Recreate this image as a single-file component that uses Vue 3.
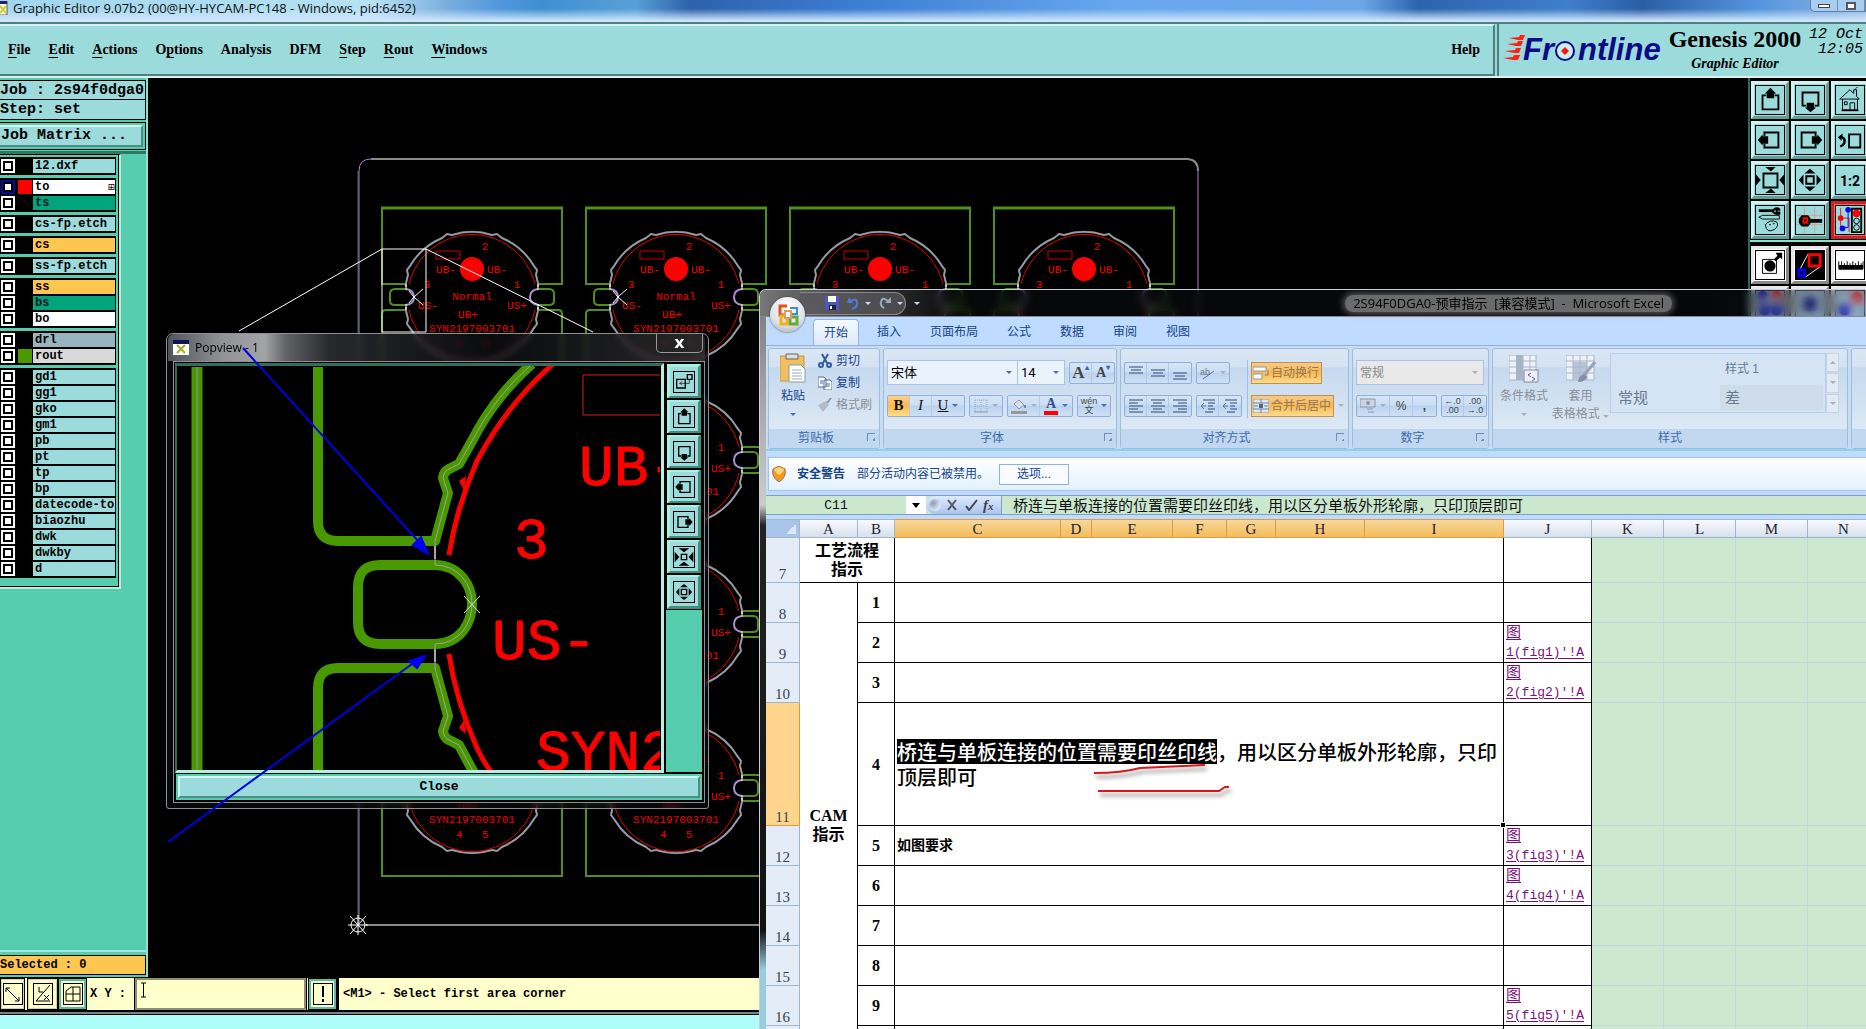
<script setup>
import { ref } from 'vue'

const menus = [
  ['', 'F', 'ile'], ['', 'E', 'dit'], ['', 'A', 'ctions'], ['O', 'p', 'tions'], ['Analysis', '', ''],
  ['DFM', '', ''], ['', 'S', 'tep'], ['', 'R', 'out'], ['', 'W', 'indows'],
]

const layerGroups = [
  [{ n: '12.dxf', c: 'signal' }],
  [{ n: 'to', c: 'white', swatch: 'red', active: true }, { n: 'ts', c: 'mask' }],
  [{ n: 'cs-fp.etch', c: 'signal' }],
  [{ n: 'cs', c: 'copper' }],
  [{ n: 'ss-fp.etch', c: 'signal' }],
  [{ n: 'ss', c: 'copper' }, { n: 'bs', c: 'mask' }, { n: 'bo', c: 'white' }],
  [{ n: 'drl', c: 'drill' }, { n: 'rout', c: 'rout', swatch: 'green' }],
  ['gd1', 'gg1', 'gko', 'gm1', 'pb', 'pt', 'tp', 'bp', 'datecode-to', 'biaozhu', 'dwk', 'dwkby', 'd'].map((n) => ({ n, c: 'signal' })),
]

const icons = {
  up: '<path d="M11 10H7v15h17V10h-4" fill="none" stroke="#000" stroke-width="2"/><path d="M15.500 2l6 6h-2v5h-8V8h-2z"/>',
  down: '<path d="M11 21H7V7h17v14h-4" fill="none" stroke="#000" stroke-width="2"/><path d="M15.500 28l6-5h-2v-5h-8v5h-2z"/>',
  left: '<path d="M9 11V7h15v16H9v-4" fill="none" stroke="#000" stroke-width="2"/><path d="M2 15l5-6v2h6v8H7v2z"/>',
  right: '<path d="M21 11V7H6v16h15v-4" fill="none" stroke="#000" stroke-width="2"/><path d="M28 15l-5-6v2h-6v8h6v2z"/>',
  home: '<path d="M4 14L15 4l4 4V4h3v7l3 3zM7 14v12h16V14M15 26v-8h5v8M9 17h3v3H9zM21 3l2-2" fill="none" stroke="#000"/><path d="M6 26h18" stroke="#000" stroke-width="2"/>',
  back: '<path d="M14 9h12v14H14z" fill="none" stroke="#000" stroke-width="2"/><path d="M2 12l5-4v3q5 2 3 8-1 3-5 4l-1-2q4-2 4-5 0-2-2-3v3z"/>',
  fit: '<path d="M8 8h15v15H8z" fill="none" stroke="#000" stroke-width="2"/><path d="M10 1h11l-5 5zM10 29h11l-5-5zM0 9v12l5-6zM30 9v12l-5-6z"/>',
  zoom: '<path d="M11 11h8v8h-8z" fill="none" stroke="#000" stroke-width="2"/><path d="M9 8h12l-6-5zM9 22h12l-6 5zM8 9v12l-5-6zM22 9v12l5-6z"/>',
  shrink: '<path d="M11 11h8v8h-8z" fill="none" stroke="#000" stroke-width="2"/><path d="M7 2h16l-8 6zM7 28h16l-8-6zM1 7v16l7-8zM29 7v16l-7-8z"/>',
  ratio: '<text x="15" y="21" text-anchor="middle" font-family="Roboto" font-weight="700" font-size="15">1:2</text>',
  tools: '<path d="M3 5h15" stroke="#000" stroke-width="3"/><path d="M26 4h-4v3h4M18 6q2-5 7-3M18 6q3 4 8 2" fill="none" stroke="#000" stroke-width="2"/><path d="M3 12l4-2h18v4H7zM10 20q5-6 12-3 3 4-2 8-9 5-10-5M14 20h2M18 19h2" fill="none" stroke="#000"/>',
  snap: '<path d="M9 1v28M20 1v28M1 10h28M1 20h28" stroke="#d99"/><path d="M6 10h7l3 4h12v4H16l-3 4H6l-3-4v-4z"/><path d="M8 13h4v5H8z" fill="none" stroke="#f00" stroke-width="2"/>',
  lights: '<path d="M0 0h30v30H0z" fill="#9cdbdb"/><path d="M5 2v24M5 13h9v15" fill="none" stroke="#e11"/><circle cx="5" cy="13" r="3" fill="#f00"/><path d="M13 5v18H7" fill="none" stroke="#00f"/><circle cx="13" cy="4" r="3" fill="#00f"/><circle cx="7" cy="24" r="3" fill="#00f"/><path d="M17 3h10v25H17z" fill="#9cdbdb" stroke="#000" stroke-width="2"/><circle cx="22" cy="8" r="4" fill="#f00"/><circle cx="22" cy="16" r="3" fill="none" stroke="#000"/><circle cx="22" cy="23" r="3" fill="none" stroke="#000"/>',
  pick: '<path d="M7 9h15v15H7z" fill="none" stroke="#000"/><circle cx="15" cy="16" r="6"/><path d="M19 9l4-4-2-3h7v7l-2-2-5 4z"/>',
  popup: '<path d="M0 0h30v30H0z"/><path d="M3 22L13 3M10 28L27 16" stroke="#fff"/><path d="M14 4h12v12H14z" fill="none" stroke="#f00" stroke-width="3"/><path d="M3 20h6v7H3z" fill="none" stroke="#00f" stroke-width="3"/>',
  ruler: '<path d="M3 11v8h26v-8" fill="none" stroke="#000"/><path d="M3 15h26v5H3z"/><path d="M6 11v5M9 13v4M12 11v5M15 13v4M18 11v5M21 13v4M24 11v5M27 13v4" stroke="#000"/>',
  dots: '<circle cx="7" cy="5" r="5" fill="#11c"/><circle cx="22" cy="5" r="5" fill="#e22"/><circle cx="9" cy="20" r="6" fill="#11c"/><circle cx="22" cy="20" r="6" fill="#11c"/>',
  chip: '<path d="M8 7h14v14H8z" fill="#117"/>',
  pair: '<circle cx="22" cy="7" r="6" fill="#e22"/><circle cx="9" cy="20" r="6" fill="#11c"/>',
  link: '<path d="M4 11h13v13H4zM20 4h7v7h-7z" fill="none" stroke="#000" stroke-width="2"/><path d="M23 11v6H8M12 14l-3 3 3 3" fill="none" stroke="#000"/>',
}
const tools = [
  ['up', 'Pan up'], ['down', 'Pan down'], ['home', 'Home'],
  ['left', 'Pan left'], ['right', 'Pan right'], ['back', 'Previous view'],
  ['fit', 'Zoom out'], ['zoom', 'Zoom in'], ['ratio', 'Scale'],
  ['tools', 'Settings'], ['snap', 'Snap'], ['lights', 'Affected layers'],
]
const modes = [
  ['pick', 'Select feature'], ['popup', 'Popview'], ['ruler', 'Measure'],
  ['dots', 'Net points'], ['chip', 'Pad'], ['pair', 'Pair'],
]
const popTools = [
  ['link', 'Link view'], ['up', 'Up'], ['down', 'Down'], ['left', 'Left'], ['right', 'Right'], ['shrink', 'Zoom out'], ['zoom', 'Zoom in'],
]

// Panel array: four board columns; boards fully behind a window are skipped
const colX = [472, 676, 880, 1084]
const rowY = [297, 460, 624, 788]
const boards = [[0, 0], [0, 3], [1, 0], [1, 1], [1, 2], [1, 3], [2, 0], [3, 0]].map(([c, r]) => ({ x: colX[c], y: rowY[r], mark: c < 2, right: c === 1 && (r === 1 || r === 2), top: c > 1 }))
const slots = colX.map((x) => {
  const l = x - 90
  const r = x + 90
  let d = `M${x - 66} 284H${l}V208M${r} 208V284H${x + 66}`
  for (let i = 0; i < 3; i++) {
    const a = rowY[i] + 13
    const b = rowY[i + 1] - 13
    d += `M${x - 66} ${a}H${l + 4}q-4 0-4 4V${b}H${x - 66}M${x + 66} ${a}H${r - 4}q4 0 4 4V${b}H${x + 66}`
  }
  return { x, d: d + `M${x - 66} 801H${l}V876H${r}V801H${x + 66}` }
})
const outline = 'M-66-10V-14L-64-22-65-27-62-31A68 68 0 0 1-30-59L-25-63-20-62A67 67 0 0 1 20-62L25-63 30-59A68 68 0 0 1 62-31L65-27 64-22 66-14V-10M-66 10V14L-64 22-65 27-62 31A68 68 0 0 0-30 59L-25 63-20 62A67 67 0 0 0 20 62L25 63 30 59A68 68 0 0 0 62 31L65 27 64 22 66 14V10'

const tabs = ['开始', '插入', '页面布局', '公式', '数据', '审阅', '视图']
const formula = ref('桥连与单板连接的位置需要印丝印线，用以区分单板外形轮廓，只印顶层即可')
const coord = ref('')
const cols = [34, 58, 37, 166, 31, 81, 54, 49, 89, 139, 88, 72, 72, 72, 72]
const letters = 'ABCDEFGHIJKLMN'.split('')
const rows = [
  { r: 8, n: 1 }, { r: 9, n: 2, fig: 1 }, { r: 10, n: 3, fig: 2 }, { r: 11, n: 4, tall: true },
  { r: 12, n: 5, fig: 3, text: '如图要求' }, { r: 13, n: 6, fig: 4 }, { r: 14, n: 7 }, { r: 15, n: 8 },
  { r: 16, n: 9, fig: 5 }, { r: '', n: '' },
]
</script>

<template>
  <div class="desktop">
    <header class="titlebar">
      <svg class="app-ico" width="8" height="14" viewBox="0 0 8 14"><path d="M-4 0H7V14H-4z" fill="#fff" stroke="#555" /><path d="M-4 0H7V3H-4z" fill="#226" /><path d="M0 5l6 7M6 5l-6 7" stroke="#cc2" stroke-width="2" /></svg>
      <span>Graphic Editor 9.07b2 (00@HY-HYCAM-PC148 - Windows, pid:6452)</span>
      <div class="winbtns"><button aria-label="Minimize"><i class="mini"></i></button><button aria-label="Maximize"><i class="maxi"></i></button></div>
    </header>

    <div class="topbar">
      <nav class="menubar">
        <button v-for="m in menus" :key="m.join('')">{{ m[0] }}<u>{{ m[1] }}</u>{{ m[2] }}</button>
        <button class="help">Help</button>
      </nav>
      <div class="brand">
        <svg class="logo" width="160" height="30" viewBox="0 0 160 30" role="img" aria-label="Frontline">
          <path d="M6 4l10-1 1-2h5l-2 5h-5zM4 10l10-1 1-2h5l-2 5h-5zM2 17l10-1 1-2h5l-2 5h-5zM0 24l10-1 1-2h6l-2 5h-5z" fill="#f21" />
          <g fill="#0b0b86" font-family="Liberation Sans" font-weight="700" font-style="italic" font-size="31"><text x="20" y="26">Fr</text><text x="75" y="26">ntline</text></g>
          <ellipse cx="62" cy="17" rx="9" ry="9" fill="#c8eef0" stroke="#0b0b86" stroke-width="2" /><path d="M62 13l4 4-4 4-4-4z" fill="#f11" />
        </svg>
        <div class="product"><b>Genesis 2000</b><i>Graphic Editor</i></div>
        <time class="clock">12 Oct<br />12:05</time>
      </div>
    </div>

    <main class="work">
      <aside class="side">
        <div class="jobbox"><div>Job : 2s94f0dga0</div><div>Step: set</div></div>
        <div class="matrix"><button>Job Matrix ...</button></div>
        <div class="layerpane">
          <div class="layers">
            <div v-for="(g, i) in layerGroups" :key="i" class="group">
              <label v-for="l in g" :key="l.n" class="layer">
                <input type="checkbox" :class="{ on: l.active }" /><span class="swatch" :class="l.swatch"></span><span class="lname" :class="l.c">{{ l.n }}<em v-if="l.active">⊞</em></span>
              </label>
            </div>
          </div>
        </div>
        <div class="selected"><div>Selected : 0</div></div>
      </aside>

      <div class="canvas">
        <svg width="100%" height="100%">
          <g transform="translate(-147 -78)" fill="none">
            <path d="M358 925V171" stroke="#3c7a10" /><path d="M359 925V171Q359 159 371 159" stroke="#a57fd0" />
            <path d="M371 159H1188Q1198 160 1198 171" stroke="#8b8b8b" stroke-width="2" /><path d="M1198 171V925" stroke="#a57fd0" /><path d="M366 925H1198" stroke="#8b8b8b" stroke-width="2" />
            <g v-for="s in slots" :key="s.x"><path :d="s.d" stroke="#4f8f1e" stroke-width="2" /><path :d="`M${s.x - 91} 208H${s.x + 91}`" stroke="#4f8f1e" stroke-width="3" /></g>
            <g v-for="b in boards" :key="b.x + '-' + b.y" :transform="`translate(${b.x} ${b.y})`">
              <path :d="outline" stroke="#4f8f1e" stroke-width="2" /><path :d="outline" stroke="#a58fc8" stroke-width="1.500" />
              <path d="M-66-8H-77q-5 0-5 5V4q0 4 5 4h11M66-8H77q5 0 5 5V4q0 4-5 4H66" stroke="#4f8f1e" stroke-width="2" />
              <path d="M-66-8Q-58-7-58 0-58 7-66 8M66-8Q58-7 58 0 58 7 66 8" stroke="#a98fd0" stroke-width="2" />
              <path d="M-66-13v6M66-13v6M-66 7v6M66 7v6" stroke="#fff" />
              <path d="M-63-13A65 65 0 0 1-30-55A63 63 0 0 1 30-55A65 65 0 0 1 63-13M-63 13A65 65 0 0 0-30 56A63 63 0 0 0 30 56A65 65 0 0 0 63 13" stroke="#e00000" />
              <path d="M-36-46h24v8h-24z" stroke="#c00" />
              <circle cy="-28" r="12" fill="#f00" />
              <g class="silk">
                <text x="45" y="-9">1</text>
                <template v-if="!b.right">
                  <text x="13" y="-47">2</text><text x="-26" y="-24">UB-</text><text x="25" y="-24">UB-</text><text x="-45" y="-9">3</text>
                  <text v-if="!b.top" x="0" y="3">Normal</text><text v-if="!b.top" x="-44" y="12">US-</text><text v-if="!b.top" x="-4" y="21">UB+</text>
                  <text v-if="!b.top" x="-13" y="50">4</text><text v-if="!b.top" x="13" y="50">5</text>
                </template>
                <text v-if="!b.top" x="45" y="12">US+</text><text v-if="!b.top" x="0" y="35">SYN2197003701</text>
              </g>
              <path v-if="b.mark" d="M-58 0l9-8M-58 0l9 8M-58 0l-5-6M-58 0l-5 6" stroke="#fff" />
            </g>
            <path d="M239 331L382 249H426V332H382V249M426 249L593 332" stroke="#fff" />
            <g stroke="#fff"><circle cx="358" cy="925" r="7" /><path d="M348 925h20M358 915v20M350 916l16 18M366 916l-16 18" /></g>
          </g>
        </svg>
      </div>

      <aside class="toolbar">
        <div class="tgrid"><button v-for="t in tools" :key="t[0]" class="tool" :class="t[0]" :aria-label="t[1]"><svg viewBox="0 0 30 30" v-html="icons[t[0]]"></svg></button></div>
        <div class="tgrid modes"><button v-for="t in modes" :key="t[0]" class="tool" :class="t[0]" :aria-label="t[1]"><svg viewBox="0 0 30 30" v-html="icons[t[0]]"></svg></button></div>
      </aside>
    </main>

    <footer class="status">
      <button class="sb" aria-label="Corner mode"><svg width="18" height="20" viewBox="0 0 18 20"><path d="M2 4l13 13M2 8V4h4M11 17h4v-4" fill="none" stroke="#000" /></svg></button>
      <button class="sb" aria-label="Angle mode"><svg width="18" height="20" viewBox="0 0 18 20"><path d="M16 1L2 17h14M5 3v5h4M10 11l5 5M15 11l-5 5" fill="none" stroke="#000" /></svg></button>
      <button class="sb raised" aria-label="Grid mode"><svg width="18" height="20" viewBox="0 0 18 20"><path d="M2 17V7l5-4h9v14zM9 3v14M2 10h14" fill="none" stroke="#000" /></svg></button>
      <label for="xy">X Y :</label>
      <div class="xybox"><input id="xy" v-model="coord" type="text" /><svg class="ibeam" width="7" height="16" viewBox="0 0 7 16"><path d="M1 1h5M1 15h5M3.500 1v14" stroke="#000" /></svg></div>
      <button class="sb raised" aria-label="Alert"><svg width="18" height="20" viewBox="0 0 18 20"><path d="M9 2v11M9 15v3" stroke="#000" stroke-width="2" /></svg></button>
      <output>&lt;M1&gt; - Select first area corner</output>
    </footer>
    <div class="baseline"></div>

    <section class="popview">
      <header><svg width="16" height="15" viewBox="0 0 16 15"><path d="M0 0h16v15H0z" fill="#fff" /><path d="M0 0h16v4H0z" fill="#115" /><path d="M4 5l8 8M12 5l-8 8" stroke="#aa2" stroke-width="2" /></svg><span>Popview - 1</span><button aria-label="Close window">x</button></header>
      <div class="popinner">
        <div class="poprow">
          <div class="popcanvas">
            <svg width="100%" height="100%">
              <g transform="translate(-176 -365)" fill="none">
                <path d="M197 366V770" stroke="#489800" stroke-width="11" /><path d="M197 366V770" stroke="#9a8f9a" />
                <g stroke="#489800" stroke-width="10">
                  <path d="M318 366V520Q318 540 338 540H435L448 492 443 477Q444 470 449 468L459 463 472 440Q495 395 532 363" stroke-linejoin="round" />
                  <path d="M318 771V687Q318 667 338 667H435L448 715 443 730Q444 737 449 739L459 744 474 772" stroke-linejoin="round" />
                  <path d="M435 564H380Q358 564 358 586V621Q358 643 380 643H435Q452 643 463 630 472 618 472 603 472 588 463 577 452 564 435 564z" />
                </g>
                <path d="M435 564V540L448 492 443 477Q444 470 449 468L459 463 472 440Q495 395 532 363M435 643V667L448 715 443 730Q444 737 449 739L459 744 474 772M435 564Q452 564 463 577 472 588 472 603 472 618 463 630 452 643 435 643" stroke="#a99aa9" />
                <path d="M435 545v13M435 648v13" stroke="#fff" /><path d="M464 595l16 17M480 595l-16 17" stroke="#ddd" />
                <path d="M449 554Q456 508 477 460 508 402 553 363M449 653Q456 700 477 747 484 762 492 772" stroke="#f00" stroke-width="5" />
                <path d="M459 480l7-5-2 14zM459 727l7 6-2-14z" fill="#f00" />
                <path d="M664 374H583V414H664" stroke="#d02020" />
                <g class="bigsilk"><text x="579" y="484">UB-</text><text x="514" y="557">3</text><text x="492" y="658">US-</text><text x="536" y="769">SYN2</text></g>
              </g>
            </svg>
          </div>
          <div class="poptools"><button v-for="t in popTools" :key="t[0]" :aria-label="t[1]"><svg viewBox="0 0 30 30" width="22" height="22" v-html="icons[t[0]]"></svg></button></div>
        </div>
        <div class="popclose"><button>Close</button></div>
      </div>
    </section>

    <section class="excel">
      <header class="xtitle">
        <div class="qat">
          <svg width="14" height="14" viewBox="0 0 14 14"><path d="M0 0h14v14H0z" fill="#4b55c4" /><path d="M3 0h8v6H3z" fill="#fff" /><path d="M4 9h7v5H4z" fill="#223" /><path d="M5 10h2v3H5z" fill="#fff" /></svg>
          <svg width="12" height="14" viewBox="0 0 12 14"><path d="M3 6q6-5 7 0 1 5-5 7" fill="none" stroke="#4a7fd0" stroke-width="2" /><path d="M0 7l2-6 4 6z" fill="#4a7fd0" /></svg><i class="dn lt"></i>
          <svg width="12" height="14" viewBox="0 0 12 14"><path d="M9 5Q3 0 2 6q-1 4 3 6" fill="none" stroke="#9ab" stroke-width="2" /><path d="M12 7V1L6 7z" fill="#9ab" /></svg><i class="dn lt"></i>
        </div>
        <i class="dn lt bar"></i>
        <h1>2S94F0DGA0-预审指示&nbsp; [兼容模式]&nbsp; - &nbsp;Microsoft Excel</h1>
      </header>
      <button class="orb" aria-label="Office"><svg width="24" height="26" viewBox="0 0 24 26" fill="none" stroke-width="3"><path d="M11 4H4v9h5" stroke="#e0541c" /><path d="M14 6h7v6h-6" stroke="#3b8fd0" stroke-width="2" /><path d="M10 14H5v8h6v-5" stroke="#f0b020" /><path d="M14 15h7v7h-7v-5" stroke="#6aa83a" /><path d="M9 9h6v7H9z" stroke="#d8a060" stroke-width="2" /></svg></button>
      <div class="xbody">
        <div class="tabs"><button v-for="(t, i) in tabs" :key="t" :class="{ cur: !i }">{{ t }}</button></div>
        <div class="ribbon">
          <div class="rg g1">
            <div class="rb">
              <button class="paste"><svg width="26" height="30" viewBox="0 0 26 30"><path d="M0 3h24v25H0z" fill="#f0c060" stroke="#c89838" /><path d="M6 1h12v5H6z" fill="#ddd" stroke="#666" /><path d="M9 12h12l4 4v13H9z" fill="#fff" stroke="#89a" /><path d="M12 17h9M12 20h10M12 23h10M12 26h10" stroke="#9ab" /></svg>粘贴<i class="dn"></i></button>
              <div class="clip">
                <button><svg width="14" height="16" viewBox="0 0 14 16" fill="none" stroke="#345c9c" stroke-width="2"><path d="M4 1l5 9M10 1L5 10" /><circle cx="3" cy="12" r="2" /><circle cx="11" cy="12" r="2" /></svg>剪切</button>
                <button><svg width="14" height="14" viewBox="0 0 14 14" fill="#fff" stroke="#4a6aa0"><path d="M0 1h6l2 2v8H0zM6 4h6l2 2v8H6z" /><path d="M8 8h4M8 10h4M2 5h3M2 7h3" /></svg>复制</button>
                <button class="off"><svg width="14" height="14" viewBox="0 0 14 14"><path d="M0 7l8-4 3 4-6 7z" fill="#b4bcc6" /><path d="M9 5l4-5" stroke="#8f98a4" stroke-width="2" /></svg>格式刷</button>
              </div>
            </div>
            <div class="rl">剪贴板<i class="launch"></i></div>
          </div>
          <div class="rg g2">
            <div class="rb rows">
              <div class="r"><span class="sel font"><select aria-label="Font"><option>宋体</option></select><i class="dn"></i></span><span class="sel size"><select aria-label="Size"><option>14</option></select><i class="dn"></i></span><span class="bg"><button class="big">A<sup>▴</sup></button><button class="sm">A<sup>▾</sup></button></span></div>
              <div class="r">
                <span class="bg"><button class="hot ser"><b>B</b></button><button class="ser"><i>I</i></button><button class="ser wide"><u>U</u><i class="dn"></i></button></span>
                <span class="bg"><button class="wide" aria-label="Borders"><svg width="14" height="14" viewBox="0 0 14 14"><path d="M1 1h12v12M1 1v12M7 1v12M1 7h12" stroke="#9ab" stroke-dasharray="1 1" fill="none" /><path d="M0 13h14" stroke="#89a" /></svg><i class="dn off"></i></button></span>
                <span class="bg"><button class="wide" aria-label="Fill"><svg width="16" height="16" viewBox="0 0 16 16"><path d="M3 6l5-4 5 5-5 4z" fill="#dde" stroke="#8a96a8" /><path d="M14 7v3" stroke="#789" stroke-width="2" /><path d="M0 13h16v3H0z" fill="#999" /></svg><i class="dn off"></i></button><button class="wide fc"><span>A</span><i class="dn"></i></button></span>
                <span class="bg"><button class="wide wen"><span>wén<br />文</span><i class="dn"></i></button></span>
              </div>
            </div>
            <div class="rl">字体<i class="launch"></i></div>
          </div>
          <div class="rg g3">
            <div class="rb two">
              <div class="rows">
                <div class="r"><span class="bg"><button v-for="k in 3" :key="k" aria-label="Vertical align"><svg width="14" height="14" viewBox="0 0 14 14"><path :d="`M0 ${k * 3 - 2}h14M2 ${k * 3 + 1}h10M0 ${k * 3 + 4}h14`" stroke="#334a70" /></svg></button></span><span class="bg"><button class="wide" aria-label="Orientation"><svg width="16" height="14" viewBox="0 0 16 14"><text x="0" y="9" font-size="9" fill="#678" font-family="Liberation Sans">ab</text><path d="M3 13L14 5" stroke="#678" /></svg><i class="dn off"></i></button></span></div>
                <div class="r"><span class="bg"><button v-for="k in 3" :key="k" aria-label="Horizontal align"><svg width="14" height="14" viewBox="0 0 14 14"><path :d="`M0 1h14M${[0, 2, 5][k - 1]} 4h9M0 7h14M${[0, 2, 5][k - 1]} 10h9M0 13h14`" stroke="#334a70" /></svg></button></span><span class="bg"><button v-for="k in 2" :key="k" aria-label="Indent"><svg width="14" height="14" viewBox="0 0 14 14"><path d="M2 1h12M7 4h7M7 7h5M7 10h7M4 13h8" stroke="#334a70" /><path d="M0 7h5M3 4L0 7l3 3" stroke="#678" fill="none" /></svg></button></span></div>
              </div>
              <div class="rows wrapcol">
                <div class="r"><button class="gold"><svg width="16" height="14" viewBox="0 0 16 14"><path d="M0 1h13v4H0zM0 8h9v5H0z" fill="#fff" stroke="#89a" /><path d="M15 4v5h-3" stroke="#58a" fill="none" /></svg>自动换行</button></div>
                <div class="r"><button class="gold"><svg width="16" height="14" viewBox="0 0 16 14"><path d="M0 0h16v14H0z" fill="#dde6f4" stroke="#89a" /><path d="M0 4h16M0 10h16M8 0v4M8 10v4M1 7h4M11 7h4" stroke="#68a" /><path d="M6 5h4v4H6z" fill="#567" /></svg>合并后居中</button><i class="dn off"></i></div>
              </div>
            </div>
            <div class="rl">对齐方式<i class="launch"></i></div>
          </div>
          <div class="rg g4">
            <div class="rb rows">
              <div class="r"><span class="sel num"><select aria-label="Number format" disabled><option>常规</option></select><i class="dn off"></i></span></div>
              <div class="r"><span class="bg pct"><button class="wide" aria-label="Currency"><svg width="16" height="16" viewBox="0 0 16 16"><path d="M0 1h15v8H0z" fill="#cdd5e0" stroke="#8a96a8" /><circle cx="8" cy="5" r="2" fill="#89a" /><path d="M7 11h6M8 14h6" stroke="#89a" /></svg><i class="dn off"></i></button><button>%</button><button><b>,</b></button></span><span class="bg dec"><button>←.0<br />.00</button><button>.00<br />→.0</button></span></div>
            </div>
            <div class="rl">数字<i class="launch"></i></div>
          </div>
          <div class="rg g5">
            <div class="rb">
              <button class="cf off"><svg width="30" height="28" viewBox="0 0 30 28"><path d="M0 0h27v25H0z" fill="#eef2f8" stroke="#a8b4c8" /><path d="M7 0h7v25H7z" fill="#a8b4c8" /><path d="M0 6h27M0 12h27M0 18h27M14 0v25M21 0v25" stroke="#a8b4c8" /><path d="M15 15h14v12H15z" fill="#eef" stroke="#889" /><path d="M22 18l-3 2 3 2M23 22l3 2-3 2" stroke="#667" fill="none" /></svg>条件格式<i class="dn off"></i></button>
              <button class="cf off"><svg width="30" height="28" viewBox="0 0 30 28"><path d="M0 0h28v25H0z" fill="#eef2f8" stroke="#a8b4c8" /><path d="M7 7h14v18H7z" fill="#b8c4d8" /><path d="M0 6h28M0 12h28M0 18h28M7 0v25M14 0v25M21 0v25" stroke="#a8b4c8" /><path d="M29 7L18 20" stroke="#98a4b8" stroke-width="3" /><path d="M12 27q1-7 6-8l3 3q-2 5-9 5" fill="#8490a8" /></svg>套用<span>表格格式 <i class="dn off"></i></span></button>
              <div class="gallery"><span></span><span>样式 1</span><span class="lg">常规</span><span class="lg dim">差</span></div>
              <div class="gscroll"><button aria-label="Up"><i class="dn off flip"></i></button><button aria-label="Down"><i class="dn off"></i></button><button aria-label="More"><i class="dn off"></i></button></div>
            </div>
            <div class="rl wide">样式</div>
          </div>
          <div class="rg g6"><div class="rb"><button class="cf off"><svg width="30" height="28" viewBox="0 0 30 28"><path d="M0 1h20v5H0zM0 16h20v10H0z" fill="#fff" stroke="#a8b4c8" /></svg></button></div><div class="rl"></div></div>
        </div>
        <div class="warn">
          <svg width="14" height="16" viewBox="0 0 14 16"><path d="M7 0l6 3q2 8-6 13-8-5-6-13z" fill="#f59a1c" stroke="#876" /><path d="M7 1l5 2q0 3-5 6-5-4-5-6z" fill="#fbd27a" /></svg>
          <strong>安全警告</strong><span>部分活动内容已被禁用。</span><button>选项...</button>
        </div>
        <div class="fbar">
          <input class="name" aria-label="Name box" value="C11" /><button class="ndrop" aria-label="Names"><i class="dn blk"></i></button>
          <div class="fx"><i class="knob"></i><button aria-label="Cancel"><svg width="10" height="12" viewBox="0 0 10 12"><path d="M1 1l8 10M9 1L1 11" stroke="#556" stroke-width="2" /></svg></button><button aria-label="Enter"><svg width="13" height="12" viewBox="0 0 13 12"><path d="M1 7l3 4L12 1" stroke="#445" stroke-width="2" fill="none" /></svg></button><button class="fn">f<small>x</small></button></div>
          <input v-model="formula" class="ftext" aria-label="Formula" />
        </div>
        <div class="sheet">
          <table>
            <colgroup><col v-for="(w, i) in cols" :key="i" :style="{ width: w + 'px' }" /></colgroup>
            <thead><tr><th class="corner"></th><th v-for="(l, i) in letters" :key="l" :class="{ hl: i > 1 && i < 9 }">{{ l }}</th></tr></thead>
            <tbody>
              <tr class="r7"><th>7</th><td colspan="2" class="c cap">工艺流程<br />指示</td><td colspan="7"></td><td></td><td v-for="k in 4" :key="k" class="out"></td></tr>
              <tr v-for="(r, i) in rows" :key="r.r" :class="{ tall: r.tall }">
                <th>{{ r.r }}</th>
                <td v-if="!i" :rowspan="rows.length" class="c cap cam"><div>CAM<br />指示</div></td>
                <td class="c no">{{ r.n }}</td>
                <td v-if="r.tall" colspan="7" class="note"><mark>桥连与单板连接的位置需要印丝印线</mark>，用以区分单板外形轮廓，只印<br />顶层即可<i class="handle"></i></td>
                <td v-else colspan="7" class="req">{{ r.text }}</td>
                <td class="fig"><a v-if="r.fig" href="#"><span>图</span><br />{{ r.fig }}(fig{{ r.fig }})'!A</a></td>
                <td v-for="k in 4" :key="k" class="out"></td>
              </tr>
            </tbody>
          </table>
        </div>
      </div>
    </section>

    <svg class="marks" width="100%" height="100%">
      <g stroke="#0000e8" stroke-width="2" fill="#0000ff"><path d="M243 348L420 543M168 842L412 664" /><path d="M428 554L413 545 421 537zM425 656L417 668 409 661z" /></g>
      <g class="pen"><path d="M1094 773Q1122 773 1140 768 1160 767 1205 765" /><path d="M1098 791H1219L1225 787H1229" /></g>
    </svg>
  </div>
</template>

<style>
body { margin: 0; overflow: hidden; }
</style>

<style scoped>
* { box-sizing: border-box; }
button { font: inherit; color: inherit; margin: 0; padding: 0; border: 0; background: none; border-radius: 0; }
.desktop { position: relative; height: 100vh; display: flex; flex-direction: column; background: #000; overflow: hidden; font-family: "Liberation Sans", "Noto Sans CJK SC", sans-serif; }

.titlebar { height: 22px; flex: none; display: flex; align-items: center; gap: 5px; padding-bottom: 6px; font: 13px/16px "Open Sans", sans-serif; color: #111;
  background: linear-gradient(180deg, transparent 40%, #cfe6fb 95%), linear-gradient(90deg, #9fd6ee 0, #b7e2f4 20%, #79aede 24%, #4f96dc 27%, #3f8fd0 29%, #58a0d8 34%, #2d62aa 37%, #3a7ad0 45%, #68a8ee 60%, #6aa6e8 73%, #2c64ac 76%, #3f7fcb 84%, #2a5ea4 88%, #5294dc 94%, #8fb8e4 100%); }
.app-ico { flex: none; }
.winbtns { margin-left: auto; align-self: flex-start; display: flex; width: 56px; height: 12px; border: 1px solid #5f7fa8; border-top: 0; border-radius: 0 0 0 5px; background: #a9cdee; }
.winbtns button { width: 28px; display: flex; justify-content: center; align-items: center; border-right: 1px solid #6f8fb8; }
.mini { width: 12px; height: 4px; background: #fff; border: 1px solid #445; }
.maxi { width: 10px; height: 8px; background: #fff; border: 2px solid #556; }

.topbar { height: 56px; flex: none; display: flex; border-top: 2px solid #4f8080; background: #9cdbdb; border-bottom: 2px solid #d9f3f3; }
.menubar { flex: 1; display: flex; align-items: center; gap: 18px; padding: 0 13px 0 8px; font: bold 14px/18px "Liberation Serif", serif; border-top: 2px solid #d4f2f2; border-right: 2px solid #4f8080; border-bottom: 2px solid #4f8080; }
.menubar u { text-underline-offset: 3px; }
.menubar .help { margin-left: auto; }
.brand { width: 369px; flex: none; display: flex; align-items: flex-start; border-left: 2px solid #4f8080; margin-left: 2px; background: #9cdbdb; }
.logo { flex: none; margin: 10px 0 0 4px; }
.product { flex: none; width: 140px; margin: 2px 0 0 2px; display: flex; flex-direction: column; align-items: center; white-space: nowrap; }
.product b { font: bold 24px/26px "Liberation Serif", serif; }
.product i { font: italic bold 14px/24px "Liberation Serif", serif; }
.clock { flex: none; width: 58px; margin: 3px 0 0 0; text-align: right; font: italic 15px/15px "Liberation Mono", monospace; }

.work { flex: 1; min-height: 0; display: flex; }
.side { width: 148px; flex: none; display: flex; flex-direction: column; background: #55cdae; font: bold 15px/20px "Liberation Mono", monospace; border-right: 2px solid #8fe0cc; padding-top: 2px; }
.jobbox { width: 146px; border: 1px solid #000; border-left: 0; background: #9cdbdb; margin-bottom: 2px; white-space: nowrap; }
.jobbox div { height: 19px; }
.jobbox div:first-child { border-bottom: 1px solid #000; }
.matrix { width: 146px; height: 28px; border: 1px solid #000; border-left: 0; padding: 2px 2px 2px 0; }
.matrix button { width: 100%; height: 100%; text-align: left; padding-left: 1px; line-height: 18px; background: #9cdbdb; border: solid; border-width: 2px 2px 2px 0; border-color: #d4f6f0 #4d8f88 #4d8f88; }
.layerpane { flex: 1; border-top: 3px solid #2b7a66; margin-top: 1px; border-bottom: 2px solid #9eeadb; }
.layers { width: 121px; padding: 2px 4px 9px 0; border: solid; border-width: 1px 2px 2px 0; border-color: #000 #b0efe2 #b0efe2; box-shadow: inset -1px -1px 0 #000; }
.group { background: #000; padding: 1px 0; margin-bottom: 3px; width: 116px; }
.group:last-child { margin-bottom: 0; }
.layer { display: flex; align-items: center; height: 16px; font-size: 12px; line-height: 14px; }
.layer input { appearance: none; flex: none; width: 14px; height: 14px; margin: 0 3px 0 1px; border: 2px solid #fff; background: #fff; outline: 2px solid #000; outline-offset: -4px; }
.layer input.on { border-color: #001199; }
.swatch { flex: none; width: 14px; height: 14px; margin-right: 1px; }
.swatch.red { background: #f00; }
.swatch.green { background: #4a9900; }
.lname { width: 82px; height: 14px; padding-left: 2px; display: flex; justify-content: space-between; align-items: center; }
.lname em { font: 9px/10px "DejaVu Sans", sans-serif; }
.signal { background: #9cdbdb; } .white { background: #fff; } .mask { background: #00a57c; color: #012; } .copper { background: #fdc64f; } .drill { background: #9ab4bf; } .rout { background: #d9d9d9; }
.selected { height: 25px; padding: 3px 0; }
.selected div { width: 146px; height: 20px; border: 1px solid #000; border-left: 0; background: #fdc64f; font-size: 12px; line-height: 18px; }

.canvas { flex: 1; min-width: 0; background: #000; }
.canvas svg { display: block; margin-left: -1px; }
.silk text { font: 11px "Liberation Mono", monospace; fill: #f00000; text-anchor: middle; }
.bigsilk text { font: 58px "Liberation Mono", monospace; fill: #f00; stroke: #f00; stroke-width: 1; stroke-linejoin: round; }

.toolbar { width: 118px; flex: none; overflow: hidden; border-left: 2px solid #2b6a5e; background: #000; }
.tgrid { width: 122px; display: grid; grid-template-columns: repeat(3, 38px); gap: 2px; padding: 3px 0 1px 1px; border-bottom: 2px solid #8fe0cc; }
.tool { height: 38px; display: flex; align-items: center; justify-content: center; background: #9cdbdb; border: 3px solid; border-color: #d0f2f0 #5f9f9b #5f9f9b #d0f2f0; }
.tool svg { border: 1px solid #000; width: 30px; height: 30px; flex: none; }
.tool.lights { background: #e66; border-color: #c22; }
.modes { padding-top: 4px; border: 0; }
.modes .tool { background: #fff; border-color: #e8e8e8 #888 #888 #e8e8e8; }
.modes .dots, .modes .chip, .modes .pair { background: #a9c4dc; }

.status { height: 33px; flex: none; display: flex; align-items: stretch; background: #ffffcc; border-top: 1px solid #000; font: bold 12px/32px "Liberation Mono", monospace; }
.sb { width: 31px; flex: none; display: flex; align-items: center; justify-content: center; background: #ffffcc; border: 2px solid #d4d4a0; outline: 1px solid #000; outline-offset: -1px; }
.sb:first-child { width: 25px; margin-right: 2px; }
.sb svg { border: 1px solid #000; flex: none; width: 20px; height: 22px; }
.sb.raised { width: 29px; border: 3px solid #55bda0; }
.status label { width: 48px; padding-left: 3px; white-space: nowrap; }
.xybox { position: relative; width: 171px; margin-right: 2px; border: 2px solid #8f8f6c; outline: 1px solid #000; }
.xybox input { display: block; width: 100%; height: 100%; border: 0; outline: 0; background: #ffffcc; font: inherit; }
.ibeam { position: absolute; left: 3px; top: 2px; }
.status output { flex: 1; padding-left: 4px; border-left: 2px solid #000; }
.baseline { height: 19px; flex: none; border-top: 2px solid #000; box-shadow: inset 0 2px 0 #6f8787, inset 0 3px 0 #000; background: #adfefa; }

.popview { position: absolute; left: 166px; top: 333px; width: 543px; height: 476px; border: 1px solid #8d9196; border-radius: 7px 7px 3px 3px; padding: 0 3px 6px 6px; background: rgba(15, 17, 20, .55); backdrop-filter: blur(3px); }
.popview header { height: 27px; display: flex; align-items: center; gap: 6px; font: 12px/16px "Open Sans", sans-serif; color: #000; background: linear-gradient(90deg, #50545a, #909296 10%, #a2a4a8 18%, #606266 22%, rgba(60, 62, 66, .6) 30%, rgba(20, 20, 22, .2) 60%, rgba(60, 60, 60, .6)); margin-left: -5px; padding-left: 5px; border-radius: 6px 6px 0 0; }
.popview header button { margin-left: auto; margin-right: 2px; align-self: flex-start; width: 47px; height: 19px; border: 1px solid #999; border-top: 0; border-radius: 0 0 5px 5px; color: #fff; font: bold 16px/14px "DejaVu Sans", sans-serif; }
.popinner { border: 1px solid #8d9196; padding: 1px; height: 442px; display: flex; flex-direction: column; background: #000; }
.poprow { flex: 1; min-height: 0; display: flex; }
.popcanvas { flex: 1; border-top: 3px solid #2f6f60; border-left: 2px solid #2f6f60; border-right: 3px solid #b8efe4; border-bottom: 3px solid #b8efe4; background: #000; overflow: hidden; }
.popcanvas svg { display: block; margin-left: -1px; }
.poptools { width: 36px; margin: 1px 1px 1px 2px; background: #55cdae; }
.poptools button { width: 34px; height: 35px; display: flex; align-items: center; justify-content: center; border: 3px solid; border-color: #a8efe4 #3f8f80 #3f8f80 #a8efe4; background: #9cdbdb; outline: 1px solid #000; margin: 0 1px; }
.poptools svg { border: 1px solid #000; flex: none; }
.popclose { height: 28px; background: #55cdae; padding: 2px; border: 1px solid #000; }
.popclose button { width: 100%; height: 22px; display: block; background: #9cdbdb; border: 2px solid; border-color: #d4f6f0 #4d8f88 #4d8f88 #d4f6f0; font: bold 13px/18px "Liberation Mono", monospace; }

.excel { position: absolute; left: 759px; right: 0; top: 289px; bottom: 0; overflow: hidden; display: flex; flex-direction: column; padding-left: 6px; border-top: 1px solid #ccd; border-left: 1px solid #ccd; border-radius: 7px 0 0 0; background: linear-gradient(180deg, #777 0, #aaa 120px, #ccc 215px, #222 235px, #111 640px, #9cd 680px) 0 0 / 6px 100% no-repeat; }
.xtitle { height: 27px; flex: none; margin-left: -6px; padding-left: 40px; display: flex; align-items: center; background: linear-gradient(90deg, #777 0, rgba(60, 60, 62, .8) 120px, rgba(12, 14, 16, .55) 200px, rgba(12, 14, 18, .6) 50%, rgba(12, 14, 18, .5) 85%, rgba(60, 80, 100, .2)); backdrop-filter: blur(4px); border-bottom: 1px solid #889; }
.qat { width: 106px; height: 23px; display: flex; align-items: center; gap: 8px; padding-left: 25px; border: 1px solid #888; border-left: 0; border-radius: 0 12px 12px 0; background: rgba(90, 90, 96, .7); }
.qat svg { flex: none; }
.qat svg + .dn { margin-left: -2px; }
.bar { margin-left: 8px; border-top-width: 4px; }
.xtitle h1 { margin: 0 194px 0 auto; padding: 0 8px; font: 13px/17px "Open Sans", "Noto Sans CJK SC", sans-serif; color: #000; border-radius: 8px; background: rgba(140, 140, 142, .75); box-shadow: 0 0 6px 2px rgba(140, 140, 142, .6); white-space: nowrap; }
.dn { display: inline-block; flex: none; width: 0; height: 0; border: 3px solid transparent; border-top-color: #4a6ea8; border-bottom: 0; }
.dn.off { border-top-color: #a8b0b8; } .dn.lt { border-top-color: #cdd8ee; } .dn.blk { border: 4px solid transparent; border-top: 5px solid #000; border-bottom: 0; } .dn.flip { transform: rotate(180deg); }
.orb { position: absolute; left: 10px; top: 7px; width: 35px; height: 35px; border-radius: 50%; display: flex; align-items: center; justify-content: center; background: radial-gradient(circle at 50% 30%, #fff, #dde2e8 60%, #9aa4b0); box-shadow: 0 0 2px #333; z-index: 2; }
.xbody { flex: 1; min-height: 0; display: flex; flex-direction: column; background: #bfdbff; font: 12px/16px "Liberation Sans", "Noto Sans CJK SC", sans-serif; color: #15428b; overflow: hidden; }
.tabs { height: 28px; flex: none; display: flex; align-items: flex-end; padding-left: 47px; gap: 7px; }
.tabs button { height: 26px; padding: 0 11px; font-size: 12px; line-height: 26px; white-space: nowrap; flex: none; }
.tabs .cur { background: linear-gradient(#f4f9ff, #dde9f7); border: 1px solid #90b4e4; border-bottom: 0; border-radius: 4px 4px 0 0; padding: 0 10px; }
.ribbon { height: 106px; flex: none; display: flex; gap: 3px; padding: 2px 0 0 2px; border-top: 1px solid #8db2e3; border-bottom: 2px solid #8fd0e8; background: #c9dcf4; overflow: hidden; }
.rg { flex: none; display: flex; flex-direction: column; border: 1px solid #9ebfdb; border-radius: 3px; background: linear-gradient(#dae6f4 0, #d4e2f2 18%, #c6d9ee 19%, #dbe8f5 78%); overflow: hidden; }
.g1 { width: 112px; } .g2 { width: 234px; } .g3 { width: 229px; } .g4 { width: 137px; } .g5 { width: 356px; } .g6 { width: 120px; }
.rb { flex: 1; min-height: 0; display: flex; padding: 4px 0 0 3px; }
.rl { height: 19px; flex: none; padding-right: 16px; background: #c1d8f0; color: #3e6aaa; text-align: center; line-height: 18px; position: relative; }
.rl.wide { padding: 0; }
.launch { position: absolute; right: 4px; top: 4px; width: 8px; height: 8px; border: solid #6f8fb8; border-width: 1px 0 0 1px; background: linear-gradient(135deg, transparent 50%, #6f8fb8 50%) 3px 3px / 5px 5px no-repeat; }
.paste { width: 42px; display: flex; flex-direction: column; align-items: center; line-height: 26px; }
.paste .dn { margin-top: 4px; }
.clip { display: flex; flex-direction: column; margin-left: 4px; gap: 6px; }
.clip button { display: flex; align-items: center; gap: 4px; height: 16px; line-height: 16px; white-space: nowrap; }
.clip svg { flex: none; }
.off { color: #8a8f98; }
.rb.rows, .rows { display: flex; flex-direction: column; gap: 8px; }
.rb.rows, .rb.two { padding-top: 11px; }
.r { height: 25px; display: flex; align-items: center; gap: 4px; }
.sel { position: relative; height: 25px; border: 1px solid #a9c3e8; background: #eaf2fb; display: block; }
.sel + .sel { margin-left: -5px; }
.sel select { appearance: none; width: 100%; height: 100%; border: 0; padding: 0 3px; background: none; font: 13px "Roboto", "Noto Sans CJK SC", sans-serif; color: #000; outline: 0; }
.sel .dn { position: absolute; right: 5px; top: 10px; }
.font { width: 131px; } .size { width: 48px; } .num { width: 128px; background: #e9e9e9; } .num select { color: #888; opacity: 1; font-size: 12px; }
.bg { display: flex; height: 22px; border: 1px solid #8fb0dc; border-radius: 2px; background: linear-gradient(#d6e5f7 0, #cbdef4 45%, #bad2ef 50%, #cfe0f5); overflow: hidden; }
.bg button { width: 22px; display: flex; align-items: center; justify-content: center; gap: 4px; border-right: 1px solid #b4cbe8; color: #444; }
.bg button:last-child { border-right: 0; }
.bg button.wide { width: 32px; }
.bg .ser { font: 15px "Liberation Serif", serif; color: #111; }
.bg .hot { background: linear-gradient(#fcd28a, #fbb84c 50%, #fde08a); }
.bg .big { font: bold 17px "Liberation Serif", serif; } .bg .sm { font: bold 14px "Liberation Serif", serif; }
.big sup, .sm sup { font-size: 8px; color: #36c; align-self: flex-start; line-height: 10px; margin-left: -4px; }
.fc span { font: bold 14px/14px "Liberation Serif", serif; color: #2b4f91; border-bottom: 4px solid #f00; padding: 0 2px; }
.wen span { font-size: 9px; line-height: 9px; }
.two { gap: 5px; }
.wrapcol { border-left: 1px solid #9fc0e4; padding-left: 3px; height: 58px; }
.gold { display: flex; align-items: center; gap: 2px; height: 22px; padding: 0 2px 0 1px; border: 1px solid #c09050; background: linear-gradient(#f8ca88, #fbb850 50%, #fddc8c); color: #8d7a5a; white-space: nowrap; }
.pct button { width: 23px; } .pct button.wide { width: 33px; }
.dec button { font: 9px/9px "Liberation Sans", sans-serif; }
.cf { width: 57px; display: flex; flex-direction: column; align-items: center; line-height: 18px; white-space: nowrap; flex: none; }
.cf:first-child { width: 56px; }
.cf svg { margin: 2px 0 4px; }
.cf > .dn { margin-top: 8px; }
.gallery { width: 216px; height: 60px; margin-left: 1px; display: grid; grid-template-columns: 1fr 1fr; grid-template-rows: 1fr 1fr; border: 1px solid #b4d0ee; background: #d5e4f4; color: #6a7890; }
.gallery span { display: flex; align-items: center; padding-left: 7px; }
.gallery .lg { font-size: 15px; } .gallery .dim { margin: 2px; background: #cfdcea; padding-left: 5px; }
.gscroll { display: flex; flex-direction: column; gap: 1px; width: 13px; height: 60px; }
.gscroll button { flex: 1; border: 1px solid #c8d4e2; background: #e2eaf4; display: flex; justify-content: center; align-items: center; }
.warn { height: 34px; flex: none; margin: 6px 0 0 2px; display: flex; align-items: center; padding-left: 3px; border: solid #a4c3ec; border-width: 1px 0 1px 1px; background: linear-gradient(#fff, #e2f1fb); }
.warn strong { margin: 0 12px 0 11px; } .warn span { margin-right: 10px; }
.warn button { width: 70px; height: 21px; border: 1px solid #8fb0dc; background: #f8fbff; }
.fbar { height: 20px; flex: none; margin: 4px 0; display: flex; border: solid #7f9fc8; border-width: 1px 0; background: #cbe8cf; }
.name { width: 140px; flex: none; border: 0; padding: 0; text-align: center; background: #cbe8cf; font: 13px "Liberation Mono", monospace; color: #111; }
.ndrop { width: 20px; background: #fff; flex: none; display: flex; align-items: center; justify-content: center; }
.fx { width: 76px; flex: none; display: flex; align-items: center; gap: 8px; padding-left: 3px; border-right: 1px solid #7f9fc8; border-radius: 10px 0 0 10px; background: linear-gradient(#dfeafa, #a9c6ef); }
.fx button { display: flex; }
.knob { width: 12px; height: 12px; border-radius: 50%; background: radial-gradient(circle at 35% 35%, #8d9db4, #dfe8f4 70%); margin-right: -2px; }
.fx .fn { font: italic bold 15px/16px "Liberation Serif", serif; color: #445; align-items: baseline; margin-left: -3px; }
.fn small { font-size: 11px; }
.ftext { flex: 1; min-width: 0; border: 0; padding: 0 0 0 11px; background: #cbe8cf; font: 15px/18px "Noto Sans CJK SC", sans-serif; color: #111; height: 18px; }

.sheet { flex: 1; min-height: 0; overflow: hidden; background: #cce8cf; }
table { width: 1114px; table-layout: fixed; border-collapse: separate; border-spacing: 0; font: 16px/19px "Liberation Serif", "Noto Sans CJK SC", serif; color: #000; }
thead th { height: 19px; padding: 1px 0 0; font: 15px/16px "Liberation Serif", serif; color: #223; border-right: 1px solid #9eb6ce; border-bottom: 1px solid #9eb6ce; border-top: 1px solid #9eb6ce; background: linear-gradient(#f8fafd, #d6e0ec); }
thead .corner { background: linear-gradient(135deg, transparent 50%, #dce8f8 50%) 20px 4px / 10px 10px no-repeat, #a9c4e9; }
thead .hl { background: linear-gradient(#f8d79a, #f3bd5c); border-color: #e49a40; }
tbody th { padding: 0; vertical-align: bottom; font: 15px/15px "Liberation Serif", serif; color: #345; background: #e4ecf7; border-right: 1px solid #9eb6ce; border-bottom: 1px solid #9eb6ce; }
tbody tr { height: 40px; }
td { padding: 0; background: #fff; border-right: 1px solid #000; border-bottom: 1px solid #000; }
tbody .r7 { height: 45px; }
tbody .tall { height: 123px; }
.tall th { background: #ffd58d; border-color: #e49a40; }
.c { text-align: center; }
.cap { font-weight: bold; font-size: 16px; }
.cam { vertical-align: top; } .cam div { padding-top: 223px; }
.no { font-weight: bold; }
.note { position: relative; font: 500 20px/25px "Noto Sans CJK SC", sans-serif; padding-left: 2px; white-space: nowrap; }
.note mark { display: inline-block; background: #000; color: #fff; }
.handle { position: absolute; right: -2px; bottom: -2px; width: 4px; height: 4px; background: #000; outline: 1px solid #fff; }
.req { font-weight: bold; font-size: 14px; padding-left: 2px; }
.fig a { display: block; padding-left: 2px; color: #7a117a; font: 13px/19px "Liberation Mono", "Noto Sans CJK SC", monospace; white-space: nowrap; text-underline-offset: 2px; }
.fig span { font-size: 15px; line-height: 18px; }
.out { background: #cce8cf; border-color: #c4d6e0; }

.marks { position: absolute; inset: 0; pointer-events: none; }
.pen { fill: none; stroke: #d81818; stroke-width: 2; filter: drop-shadow(2px 4px 2px rgba(0, 0, 0, .5)); }
</style>
